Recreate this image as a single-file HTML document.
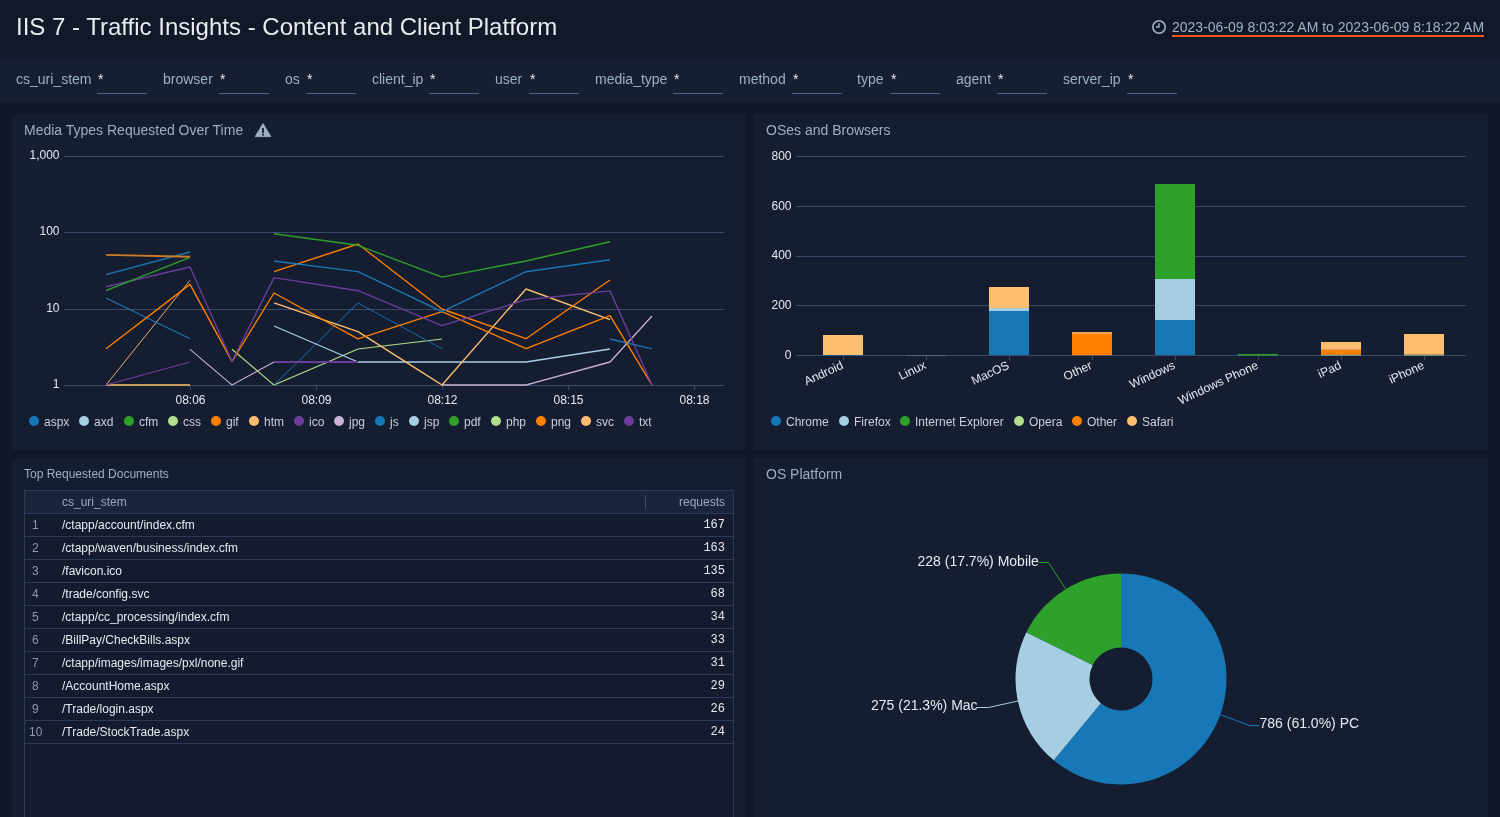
<!DOCTYPE html><html><head><meta charset="utf-8"><style>
*{box-sizing:border-box;margin:0;padding:0}
html,body{width:1500px;height:817px;overflow:hidden;background:#101727;font-family:"Liberation Sans",sans-serif}
.a{position:absolute;white-space:nowrap;will-change:transform}
#hdr{left:0;top:0;width:1500px;height:57px;background:#111828}
#filt{left:0;top:57px;width:1500px;height:45px;background:#161f32}
.fl{top:71px;font-size:14px;color:#9cafc4}
.fs{top:71px;font-size:14px;color:#e8ebf0}
.fu{top:93px;width:50px;height:1px;background:#46648a}
.panel{position:absolute;background:#151d31}
.pt{font-size:14px;color:#9cafc4}
.lg{font-size:12px;color:#c9d0da}
.dot{width:10px;height:10px;border-radius:50%}
.tr{font-size:12px;color:#e6e9ee}
.tn{font-size:12px;color:#8a9bb0}
.mono{font-family:"Liberation Mono",monospace;font-size:12px;color:#e6e9ee}
svg text{font-family:"Liberation Sans",sans-serif}
</style></head><body>
<div id="hdr" class="a"></div>
<div class="a" style="left:16px;top:13px;font-size:24px;color:#e8ebf0">IIS 7 - Traffic Insights - Content and Client Platform</div>
<svg class="a" style="left:1151px;top:19px" width="16" height="16" viewBox="0 0 16 16"><circle cx="8" cy="8" r="6.2" fill="none" stroke="#9fb3c8" stroke-width="1.6"/><path d="M8 4.2V8H5" fill="none" stroke="#9fb3c8" stroke-width="1.4"/></svg>
<div class="a" style="left:1172px;top:19px;font-size:14px;color:#9fb3c8">2023-06-09 8:03:22 AM to 2023-06-09 8:18:22 AM</div>
<div class="a" style="left:1172px;top:35px;width:312px;height:2px;background:#f4511e"></div>
<div id="filt" class="a"></div>
<div class="a fl" style="left:16px">cs_uri_stem</div><div class="a fs" style="left:98px">*</div><div class="a fu" style="left:97px"></div>
<div class="a fl" style="left:163px">browser</div><div class="a fs" style="left:220px">*</div><div class="a fu" style="left:219px"></div>
<div class="a fl" style="left:285px">os</div><div class="a fs" style="left:307px">*</div><div class="a fu" style="left:306px"></div>
<div class="a fl" style="left:372px">client_ip</div><div class="a fs" style="left:430px">*</div><div class="a fu" style="left:429px"></div>
<div class="a fl" style="left:495px">user</div><div class="a fs" style="left:530px">*</div><div class="a fu" style="left:529px"></div>
<div class="a fl" style="left:595px">media_type</div><div class="a fs" style="left:674px">*</div><div class="a fu" style="left:673px"></div>
<div class="a fl" style="left:739px">method</div><div class="a fs" style="left:793px">*</div><div class="a fu" style="left:792px"></div>
<div class="a fl" style="left:857px">type</div><div class="a fs" style="left:891px">*</div><div class="a fu" style="left:890px"></div>
<div class="a fl" style="left:956px">agent</div><div class="a fs" style="left:998px">*</div><div class="a fu" style="left:997px"></div>
<div class="a fl" style="left:1063px">server_ip</div><div class="a fs" style="left:1128px">*</div><div class="a fu" style="left:1127px"></div>
<div class="panel" style="left:12px;top:114px;width:734px;height:336px"></div>
<div class="panel" style="left:754px;top:114px;width:734px;height:336px"></div>
<div class="panel" style="left:12px;top:458px;width:734px;height:359px"></div>
<div class="panel" style="left:754px;top:458px;width:734px;height:359px"></div>
<div class="a pt" style="left:24px;top:122px">Media Types Requested Over Time</div>
<svg class="a" style="left:250px;top:118px" width="28" height="24" viewBox="250 118 28 24"><path d="M263,123.6 L270.8,136.6 H255.2Z" fill="#9cafc4" stroke="#9cafc4" stroke-width="0.9" stroke-linejoin="round"/><rect x="262.1" y="128" width="1.8" height="5.2" fill="#151d31"/><rect x="262.1" y="134" width="1.8" height="1.6" fill="#151d31"/></svg>
<div class="a pt" style="left:766px;top:122px">OSes and Browsers</div>
<div class="a pt" style="left:24px;top:467px;font-size:12px">Top Requested Documents</div>
<div class="a pt" style="left:766px;top:466px">OS Platform</div>
<div class="a dot" style="left:29px;top:416px;background:#1878b7"></div><div class="a lg" style="left:44px;top:415px">aspx</div>
<div class="a dot" style="left:79px;top:416px;background:#a6cee3"></div><div class="a lg" style="left:94px;top:415px">axd</div>
<div class="a dot" style="left:124px;top:416px;background:#2ea12b"></div><div class="a lg" style="left:139px;top:415px">cfm</div>
<div class="a dot" style="left:168px;top:416px;background:#b2df8a"></div><div class="a lg" style="left:183px;top:415px">css</div>
<div class="a dot" style="left:211px;top:416px;background:#ff7f00"></div><div class="a lg" style="left:226px;top:415px">gif</div>
<div class="a dot" style="left:249px;top:416px;background:#fdbf6f"></div><div class="a lg" style="left:264px;top:415px">htm</div>
<div class="a dot" style="left:294px;top:416px;background:#6a3d9a"></div><div class="a lg" style="left:309px;top:415px">ico</div>
<div class="a dot" style="left:334px;top:416px;background:#cab2d6"></div><div class="a lg" style="left:349px;top:415px">jpg</div>
<div class="a dot" style="left:375px;top:416px;background:#1878b7"></div><div class="a lg" style="left:390px;top:415px">js</div>
<div class="a dot" style="left:409px;top:416px;background:#a6cee3"></div><div class="a lg" style="left:424px;top:415px">jsp</div>
<div class="a dot" style="left:449px;top:416px;background:#2ea12b"></div><div class="a lg" style="left:464px;top:415px">pdf</div>
<div class="a dot" style="left:491px;top:416px;background:#b2df8a"></div><div class="a lg" style="left:506px;top:415px">php</div>
<div class="a dot" style="left:536px;top:416px;background:#ff7f00"></div><div class="a lg" style="left:551px;top:415px">png</div>
<div class="a dot" style="left:581px;top:416px;background:#fdbf6f"></div><div class="a lg" style="left:596px;top:415px">svc</div>
<div class="a dot" style="left:624px;top:416px;background:#6a3d9a"></div><div class="a lg" style="left:639px;top:415px">txt</div>
<div class="a dot" style="left:771px;top:416px;background:#1878b7"></div><div class="a lg" style="left:786px;top:415px">Chrome</div>
<div class="a dot" style="left:839px;top:416px;background:#a6cee3"></div><div class="a lg" style="left:854px;top:415px">Firefox</div>
<div class="a dot" style="left:900px;top:416px;background:#2ea12b"></div><div class="a lg" style="left:915px;top:415px">Internet Explorer</div>
<div class="a dot" style="left:1014px;top:416px;background:#b2df8a"></div><div class="a lg" style="left:1029px;top:415px">Opera</div>
<div class="a dot" style="left:1072px;top:416px;background:#ff7f00"></div><div class="a lg" style="left:1087px;top:415px">Other</div>
<div class="a dot" style="left:1127px;top:416px;background:#fdbf6f"></div><div class="a lg" style="left:1142px;top:415px">Safari</div>
<div class="a" style="left:24px;top:490px;width:710px;height:340px;border:1px solid #2a3b57;background:#141b2e"></div>
<div class="a" style="left:25px;top:491px;width:708px;height:22px;background:#1a243e"></div>
<div class="a tn" style="left:62px;top:495px;color:#9aabbe">cs_uri_stem</div>
<div class="a tn" style="left:600px;width:125px;text-align:right;top:495px;color:#9aabbe">requests</div>
<div class="a" style="left:645px;top:495px;width:1px;height:14px;background:#3b4d6b"></div>
<div class="a" style="left:25px;top:513px;width:708px;height:1px;background:#2a3b57"></div>
<div class="a tn" style="left:32px;top:518px">1</div>
<div class="a tr" style="left:62px;top:518px">/ctapp/account/index.cfm</div>
<div class="a mono" style="left:600px;width:125px;text-align:right;top:518px">167</div>
<div class="a" style="left:25px;top:536px;width:708px;height:1px;background:#2a3b57"></div>
<div class="a tn" style="left:32px;top:541px">2</div>
<div class="a tr" style="left:62px;top:541px">/ctapp/waven/business/index.cfm</div>
<div class="a mono" style="left:600px;width:125px;text-align:right;top:541px">163</div>
<div class="a" style="left:25px;top:559px;width:708px;height:1px;background:#2a3b57"></div>
<div class="a tn" style="left:32px;top:564px">3</div>
<div class="a tr" style="left:62px;top:564px">/favicon.ico</div>
<div class="a mono" style="left:600px;width:125px;text-align:right;top:564px">135</div>
<div class="a" style="left:25px;top:582px;width:708px;height:1px;background:#2a3b57"></div>
<div class="a tn" style="left:32px;top:587px">4</div>
<div class="a tr" style="left:62px;top:587px">/trade/config.svc</div>
<div class="a mono" style="left:600px;width:125px;text-align:right;top:587px">68</div>
<div class="a" style="left:25px;top:605px;width:708px;height:1px;background:#2a3b57"></div>
<div class="a tn" style="left:32px;top:610px">5</div>
<div class="a tr" style="left:62px;top:610px">/ctapp/cc_processing/index.cfm</div>
<div class="a mono" style="left:600px;width:125px;text-align:right;top:610px">34</div>
<div class="a" style="left:25px;top:628px;width:708px;height:1px;background:#2a3b57"></div>
<div class="a tn" style="left:32px;top:633px">6</div>
<div class="a tr" style="left:62px;top:633px">/BillPay/CheckBills.aspx</div>
<div class="a mono" style="left:600px;width:125px;text-align:right;top:633px">33</div>
<div class="a" style="left:25px;top:651px;width:708px;height:1px;background:#2a3b57"></div>
<div class="a tn" style="left:32px;top:656px">7</div>
<div class="a tr" style="left:62px;top:656px">/ctapp/images/images/pxl/none.gif</div>
<div class="a mono" style="left:600px;width:125px;text-align:right;top:656px">31</div>
<div class="a" style="left:25px;top:674px;width:708px;height:1px;background:#2a3b57"></div>
<div class="a tn" style="left:32px;top:679px">8</div>
<div class="a tr" style="left:62px;top:679px">/AccountHome.aspx</div>
<div class="a mono" style="left:600px;width:125px;text-align:right;top:679px">29</div>
<div class="a" style="left:25px;top:697px;width:708px;height:1px;background:#2a3b57"></div>
<div class="a tn" style="left:32px;top:702px">9</div>
<div class="a tr" style="left:62px;top:702px">/Trade/login.aspx</div>
<div class="a mono" style="left:600px;width:125px;text-align:right;top:702px">26</div>
<div class="a" style="left:25px;top:720px;width:708px;height:1px;background:#2a3b57"></div>
<div class="a tn" style="left:29px;top:725px">10</div>
<div class="a tr" style="left:62px;top:725px">/Trade/StockTrade.aspx</div>
<div class="a mono" style="left:600px;width:125px;text-align:right;top:725px">24</div>
<div class="a" style="left:25px;top:743px;width:708px;height:1px;background:#2a3b57"></div>
<svg class="a" style="left:0;top:0" width="1500" height="817"><rect x="64" y="156" width="660" height="1" fill="#38496a"/><text x="59.5" y="158.5" font-size="12" fill="#e6e9ee" text-anchor="end">1,000</text><rect x="64" y="232" width="660" height="1" fill="#38496a"/><text x="59.5" y="234.5" font-size="12" fill="#e6e9ee" text-anchor="end">100</text><rect x="64" y="309" width="660" height="1" fill="#38496a"/><text x="59.5" y="311.5" font-size="12" fill="#e6e9ee" text-anchor="end">10</text><rect x="64" y="385" width="660" height="1" fill="#38496a"/><text x="59.5" y="387.5" font-size="12" fill="#e6e9ee" text-anchor="end">1</text><rect x="190" y="385" width="1" height="5" fill="#38496a"/><text x="190.5" y="404" font-size="12" fill="#e6e9ee" text-anchor="middle">08:06</text><rect x="316" y="385" width="1" height="5" fill="#38496a"/><text x="316.5" y="404" font-size="12" fill="#e6e9ee" text-anchor="middle">08:09</text><rect x="442" y="385" width="1" height="5" fill="#38496a"/><text x="442.5" y="404" font-size="12" fill="#e6e9ee" text-anchor="middle">08:12</text><rect x="568" y="385" width="1" height="5" fill="#38496a"/><text x="568.5" y="404" font-size="12" fill="#e6e9ee" text-anchor="middle">08:15</text><rect x="694" y="385" width="1" height="5" fill="#38496a"/><text x="694.5" y="404" font-size="12" fill="#e6e9ee" text-anchor="middle">08:18</text><polyline points="106,385 190,385" fill="none" stroke="#c99c5c" stroke-width="1.8" stroke-linejoin="round" opacity="1"/><polyline points="106,385 190,280.3" fill="none" stroke="#fdbf6f" stroke-width="0.9" stroke-linejoin="round" opacity="1"/><polyline points="106,385 190,362" fill="none" stroke="#6a3d9a" stroke-width="1.15" stroke-linejoin="round" opacity="1"/><polyline points="190,349.3 232,385 274,362" fill="none" stroke="#cab2d6" stroke-width="1.07" stroke-linejoin="round" opacity="1"/><polyline points="442,385 526,385 610,362 652,316" fill="none" stroke="#cab2d6" stroke-width="1.31" stroke-linejoin="round" opacity="1"/><polyline points="232,349.3 274,385 358,349 442,339" fill="none" stroke="#b2df8a" stroke-width="1.15" stroke-linejoin="round" opacity="1"/><polyline points="106,298 190,338.7" fill="none" stroke="#1878b7" stroke-width="1.15" stroke-linejoin="round" opacity="1"/><polyline points="274,385 358,303 442,348.7" fill="none" stroke="#1878b7" stroke-width="0.9" stroke-linejoin="round" opacity="1"/><polyline points="610,339 652,348.8" fill="none" stroke="#1878b7" stroke-width="1.31" stroke-linejoin="round" opacity="1"/><polyline points="274,326 358,362 442,362 526,362 610,349" fill="none" stroke="#a6cee3" stroke-width="1.35" stroke-linejoin="round" opacity="1"/><polyline points="274,362 358,362" fill="none" stroke="#6a3d9a" stroke-width="1.8" stroke-linejoin="round" opacity="1"/><polyline points="274,302.9 358,331.6 442,385 526,289 610,319.7" fill="none" stroke="#fdbf6f" stroke-width="1.39" stroke-linejoin="round" opacity="1"/><polyline points="106,348.7 190,284.4 232,361.3 274,293 358,338.9 442,311.7 526,348.7 610,315.7 652,385" fill="none" stroke="#ff7f00" stroke-width="1.39" stroke-linejoin="round" opacity="1"/><polyline points="274,271.7 358,244 442,309 526,338.7 610,280" fill="none" stroke="#ff7f00" stroke-width="1.39" stroke-linejoin="round" opacity="1"/><polyline points="106,286.7 190,267 232,361.3 274,277.6 358,290.7 442,325.7 526,299.7 610,290.9 652,385" fill="none" stroke="#6a3d9a" stroke-width="1.39" stroke-linejoin="round" opacity="1"/><polyline points="106,274.7 190,252" fill="none" stroke="#1878b7" stroke-width="1.39" stroke-linejoin="round" opacity="1"/><polyline points="274,261 358,271.6 442,311.7 526,271.7 610,259.7" fill="none" stroke="#1878b7" stroke-width="1.39" stroke-linejoin="round" opacity="1"/><polyline points="106,290.7 190,257.3" fill="none" stroke="#2ea12b" stroke-width="1.39" stroke-linejoin="round" opacity="1"/><polyline points="274,233.7 358,245.3 442,277.1 526,261 610,241.7" fill="none" stroke="#2ea12b" stroke-width="1.39" stroke-linejoin="round" opacity="1"/><polyline points="106,254.9 190,256.7" fill="none" stroke="#cf7a26" stroke-width="1.9" stroke-linejoin="round" opacity="1"/><rect x="796" y="156" width="670" height="1" fill="#38496a"/><text x="791.5" y="159.5" font-size="12" fill="#e6e9ee" text-anchor="end">800</text><rect x="796" y="206" width="670" height="1" fill="#38496a"/><text x="791.5" y="209.5" font-size="12" fill="#e6e9ee" text-anchor="end">600</text><rect x="796" y="256" width="670" height="1" fill="#38496a"/><text x="791.5" y="258.5" font-size="12" fill="#e6e9ee" text-anchor="end">400</text><rect x="796" y="305" width="670" height="1" fill="#38496a"/><text x="791.5" y="308.5" font-size="12" fill="#e6e9ee" text-anchor="end">200</text><rect x="796" y="355" width="670" height="1" fill="#38496a"/><text x="791.5" y="358.5" font-size="12" fill="#e6e9ee" text-anchor="end">0</text><rect x="843" y="356" width="1" height="4" fill="#38496a"/><text transform="translate(844,368) rotate(-25)" font-size="12" fill="#e6e9ee" text-anchor="end">Android</text><rect x="926" y="356" width="1" height="4" fill="#38496a"/><text transform="translate(927,368) rotate(-25)" font-size="12" fill="#e6e9ee" text-anchor="end">Linux</text><rect x="1009" y="356" width="1" height="4" fill="#38496a"/><text transform="translate(1010,368) rotate(-25)" font-size="12" fill="#e6e9ee" text-anchor="end">MacOS</text><rect x="1092" y="356" width="1" height="4" fill="#38496a"/><text transform="translate(1093,368) rotate(-25)" font-size="12" fill="#e6e9ee" text-anchor="end">Other</text><rect x="1175" y="356" width="1" height="4" fill="#38496a"/><text transform="translate(1176,368) rotate(-25)" font-size="12" fill="#e6e9ee" text-anchor="end">Windows</text><rect x="1258" y="356" width="1" height="4" fill="#38496a"/><text transform="translate(1259,368) rotate(-25)" font-size="12" fill="#e6e9ee" text-anchor="end">Windows Phone</text><rect x="1341" y="356" width="1" height="4" fill="#38496a"/><text transform="translate(1342,368) rotate(-25)" font-size="12" fill="#e6e9ee" text-anchor="end">iPad</text><rect x="1424" y="356" width="1" height="4" fill="#38496a"/><text transform="translate(1425,368) rotate(-25)" font-size="12" fill="#e6e9ee" text-anchor="end">iPhone</text><rect x="823" y="335" width="40" height="20" fill="#fdbf6f"/><rect x="823" y="355" width="40" height="1" fill="#26578a"/><rect x="906" y="355" width="40" height="1" fill="#56667c"/><rect x="989" y="311" width="40" height="44" fill="#1878b7"/><rect x="989" y="308" width="40" height="3" fill="#a6cee3"/><rect x="989" y="287" width="40" height="21" fill="#fdbf6f"/><rect x="1072" y="334" width="40" height="21" fill="#ff7f00"/><rect x="1072" y="332" width="40" height="2" fill="#e9a55a"/><rect x="1072" y="355" width="40" height="1" fill="#5a5560"/><rect x="1155" y="320" width="40" height="35" fill="#1878b7"/><rect x="1155" y="279" width="40" height="41" fill="#a6cee3"/><rect x="1155" y="184" width="40" height="95" fill="#2ea12b"/><rect x="1238" y="354" width="40" height="1.5" fill="#2ea12b"/><rect x="1321" y="342" width="40" height="7" fill="#fdbf6f"/><rect x="1321" y="349" width="40" height="1" fill="#e0a060"/><rect x="1321" y="350" width="40" height="4" fill="#ff7f00"/><rect x="1321" y="354" width="40" height="1" fill="#d88a30"/><rect x="1321" y="355" width="40" height="1" fill="#5f8f8f"/><rect x="1404" y="334" width="40" height="20" fill="#fdbf6f"/><rect x="1404" y="354" width="40" height="1" fill="#c8904a"/><rect x="1404" y="355" width="40" height="1" fill="#5f8f8f"/><path d="M1121.00,573.50 A105.5,105.5 0 1 1 1053.75,760.29 L1100.92,703.27 A31.5,31.5 0 1 0 1121.00,647.50Z" fill="#1878b7"/><path d="M1053.75,760.29 A105.5,105.5 0 0 1 1026.42,632.26 L1092.76,665.04 A31.5,31.5 0 0 0 1100.92,703.27Z" fill="#a6cee3"/><path d="M1026.42,632.26 A105.5,105.5 0 0 1 1121.00,573.50 L1121.00,647.50 A31.5,31.5 0 0 0 1092.76,665.04Z" fill="#2ea12b"/><polyline points="1038.5,562.5 1048.5,562.5 1065.5,589" fill="none" stroke="#2ea12b" stroke-width="1"/><polyline points="976.5,707.5 988.5,707.5 1018,701" fill="none" stroke="#a6cee3" stroke-width="1"/><polyline points="1220,714.5 1249.5,725.5 1259.5,725.5" fill="none" stroke="#1878b7" stroke-width="1"/><text x="917.5" y="566" font-size="14" fill="#e6e9ee">228 (17.7%) Mobile</text><text x="871" y="710" font-size="14" fill="#e6e9ee">275 (21.3%) Mac</text><text x="1259.5" y="728" font-size="14" fill="#e6e9ee">786 (61.0%) PC</text></svg>
</body></html>
